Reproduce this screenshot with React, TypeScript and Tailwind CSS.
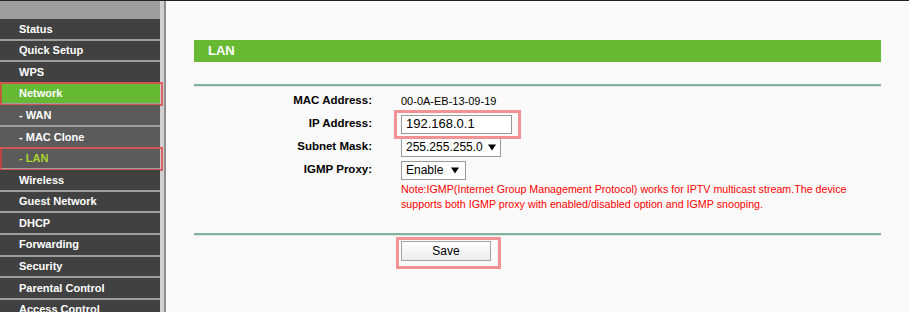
const menu = [
  { label: "Status" },
  { label: "Quick Setup" },
  { label: "WPS" },
  { label: "Network", active: true, boxed: true },
  { label: "- WAN", sub: true },
  { label: "- MAC Clone", sub: true },
  { label: "- LAN", sub: true, current: true, boxed: true },
  { label: "Wireless" },
  { label: "Guest Network" },
  { label: "DHCP" },
  { label: "Forwarding" },
  { label: "Security" },
  { label: "Parental Control" },
  { label: "Access Control" },
];

function Caret() {
  return (
    <svg width="8" height="7" viewBox="0 0 8 7" className="shrink-0">
      <path d="M0 0.5h8L4 6.5z" fill="#000" />
    </svg>
  );
}

function Sidebar() {
  return (
    <div className="flex w-[160px] shrink-0 flex-col gap-[2px] bg-[#9e9e9e]">
      <div className="h-[16px] shrink-0" />
      {menu.map((item) => {
        const bg = item.active
          ? "bg-[#66b933]"
          : item.sub
            ? "bg-[#5b5b5b]"
            : "bg-[#414141]";
        return (
          <div
            key={item.label}
            className={`relative flex h-[19.6px] shrink-0 items-center pl-[19px] text-[11px] font-bold ${bg} ${
              item.current ? "text-[#a9d42e]" : "text-white"
            }`}
          >
            {item.label}
            {item.boxed && (
              <div className="absolute -top-[1.5px] -bottom-[3px] left-0 -right-[3px] border-[2.5px] border-[rgba(225,60,60,0.75)]" />
            )}
          </div>
        );
      })}
    </div>
  );
}

function Row({ label, children }: { label: string; children: React.ReactNode }) {
  return (
    <div className="flex h-[23px] items-center">
      <div className="w-[178px] shrink-0 text-right text-[11.5px] font-bold text-black">
        {label}
      </div>
      <div className="ml-[29px] flex items-center">{children}</div>
    </div>
  );
}

export default function App() {
  return (
    <div
      className="flex h-[312px] w-[909px] overflow-hidden border-t border-[#222] bg-[#fafafa]"
      style={{ fontFamily: '"Liberation Sans", Arial, sans-serif' }}
    >
      <Sidebar />
      <div className="w-[4px] shrink-0 bg-[#d0d0d0]" />
      <div className="w-[2px] shrink-0 bg-[#8e8e8e]" />

      <div className="flex-1 px-[28px] pt-[39px]">
        <div className="flex h-[22px] items-center bg-[#67b934] pl-[14px] text-[13px] font-bold text-white">
          LAN
        </div>
        <div className="mt-[22px] h-[3px] border-b border-[#e2e2e2] bg-[#80b39a]" />

        <div className="mt-[2.5px]">
          <Row label="MAC Address:">
            <span className="text-[11px] text-black">00-0A-EB-13-09-19</span>
          </Row>
          <Row label="IP Address:">
            <div className="relative">
              <div className="flex h-[19px] w-[111px] items-center border border-[#9a9a9a] bg-white pl-[4px] text-[13px] text-black">
                192.168.0.1
              </div>
              <div className="absolute -top-[5px] -bottom-[5px] -left-[7px] -right-[9px] border-[3px] border-[#f39292]" />
            </div>
          </Row>
          <Row label="Subnet Mask:">
            <div className="flex h-[20px] w-[100px] items-center justify-between border border-[#9a9a9a] bg-white pl-[4px] pr-[4px] text-[12px] text-black">
              255.255.255.0
              <Caret />
            </div>
          </Row>
          <Row label="IGMP Proxy:">
            <div className="flex h-[19px] w-[65px] items-center justify-between border border-[#9a9a9a] bg-white pl-[4px] pr-[6px] text-[12px] text-black">
              Enable
              <Caret />
            </div>
          </Row>
          <div className="ml-[207px] text-[10.7px] leading-[15px] text-[#ff0000]">
            Note:IGMP(Internet Group Management Protocol) works for IPTV multicast stream.The device
            <br />
            supports both IGMP proxy with enabled/disabled option and IGMP snooping.
          </div>
        </div>

        <div className="mt-[21.5px] h-[3px] border-b border-[#e2e2e2] bg-[#80b39a]" />

        <div className="ml-[207px] mt-[5px]">
          <div className="relative w-[90px]">
            <button className="flex h-[20px] w-[90px] items-center justify-center border border-[#a3a3a3] bg-gradient-to-b from-white to-[#ececec] text-[12px] text-black">
              Save
            </button>
            <div className="absolute -top-[4.5px] -bottom-[8px] -left-[5px] -right-[10px] border-[3px] border-[#f39292]" />
          </div>
        </div>
      </div>
    </div>
  );
}
